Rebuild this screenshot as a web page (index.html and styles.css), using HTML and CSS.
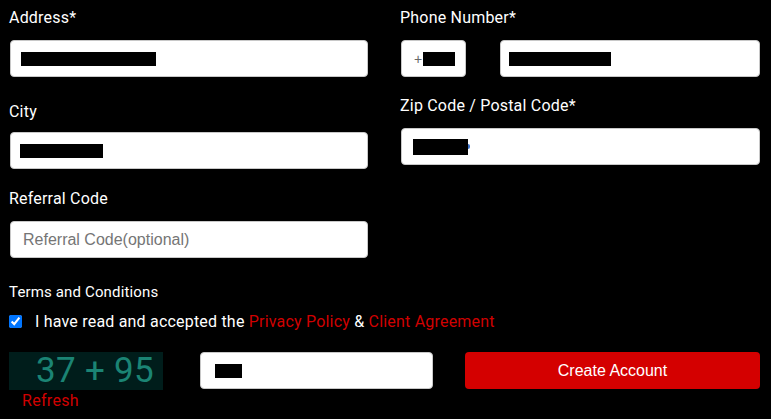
FILE: index.html
```html
<!DOCTYPE html>
<html lang="en">

<head>
    <meta charset="UTF-8">
    <meta name="viewport" content="width=device-width, initial-scale=1.0">
    <title>Create Account</title>
    <link rel="stylesheet" href="styles.css">
</head>

<body>
    <div class="form">
        <div class="fields">
            <div class="column">
                <div class="field">
                    <label>Address*</label>
                    <div class="input"><span class="redact redact-address"></span></div>
                </div>
                <div class="field field-city">
                    <label>City</label>
                    <div class="input"><span class="redact redact-city"></span></div>
                </div>
                <div class="field field-referral">
                    <label>Referral Code</label>
                    <div class="input placeholder">Referral Code(optional)</div>
                </div>
            </div>
            <div class="column">
                <div class="field">
                    <label>Phone Number*</label>
                    <div class="phone-row">
                        <div class="input code"><span class="plus">+</span><span class="redact redact-code"></span></div>
                        <div class="input phone"><span class="redact redact-phone"></span></div>
                    </div>
                </div>
                <div class="field field-zip">
                    <label>Zip Code / Postal Code*</label>
                    <div class="input"><span class="redact redact-zip"></span><span class="zip-tail"></span></div>
                </div>
            </div>
        </div>

        <div class="terms">
            <h4>Terms and Conditions</h4>
            <div class="agree">
                <input type="checkbox" checked>
                <span>I have read and accepted the <a href="#">Privacy Policy</a> &amp; <a href="#">Client Agreement</a></span>
            </div>
        </div>

        <div class="submit-row">
            <div class="captcha">
                <div class="captcha-box">37 + 95</div>
                <a href="#" class="refresh">Refresh</a>
            </div>
            <div class="input captcha-input"><span class="redact redact-captcha"></span></div>
            <button class="create-btn">Create Account</button>
        </div>
    </div>
</body>

</html>
```

FILE: styles.css
```css
body {
    font-family: Roboto, "Liberation Sans", sans-serif;
    background-color: #000;
    color: #fff;
    margin: 0;
    padding: 0;
}

.form {
    padding: 8px 11px 0 10px;
}

.fields {
    display: grid;
    grid-template-columns: 358px 359px;
    column-gap: 33px;
}

.column {
    display: flex;
    flex-direction: column;
}

label {
    display: block;
    font-size: 16px;
    line-height: 19px;
    letter-spacing: 0.2px;
    margin: 0 0 13px -1px;
}

.field-city {
    margin-top: 25px;
}

.field-city label {
    margin-bottom: 11px;
}

.field-referral {
    margin-top: 20px;
}

.field-zip {
    margin-top: 19px;
}

.input {
    box-sizing: border-box;
    height: 37px;
    background-color: #fff;
    border: 1px solid #c8c8c8;
    border-radius: 4px;
    display: flex;
    align-items: center;
    padding-left: 10px;
    font-family: "Liberation Sans", Arial, sans-serif;
    font-size: 16px;
    color: #222;
}

.placeholder {
    color: #757575;
    padding-left: 12px;
}

.redact {
    display: inline-block;
    height: 14px;
    background-color: #000;
}

.redact-address { width: 135px; }
.redact-city { width: 83px; margin-left: -1px; }
.redact-phone { width: 102px; }
.redact-zip { width: 55px; margin-left: 1px; height: 16px; }
.redact-code { width: 32px; }
.redact-captcha { width: 27px; margin-left: 1px; }

.zip-tail {
    display: inline-block;
    width: 2px;
    height: 5px;
    background-color: #3a6fc4;
    border-radius: 0 3px 3px 0;
}

.phone-row {
    display: flex;
    gap: 34px;
}

.code {
    width: 65px;
    padding-left: 12px;
}

.plus {
    color: #666;
    font-size: 14px;
    margin-right: 1px;
}

.phone {
    flex: 1;
    padding-left: 8px;
}

.terms {
    margin-top: 26px;
}

h4 {
    font-size: 15px;
    font-weight: normal;
    line-height: 17px;
    letter-spacing: 0.15px;
    margin: 0 0 11px -1px;
}

.agree {
    display: flex;
    align-items: center;
    height: 19px;
    font-size: 16px;
    letter-spacing: 0.2px;
    margin-left: -1px;
}

.agree input {
    width: 13px;
    height: 13px;
    margin: 0 13px 0 0;
    accent-color: #0075ff;
}

a {
    color: #d00000;
    text-decoration: none;
}

.submit-row {
    display: flex;
    align-items: flex-start;
    margin-top: 21px;
}

.captcha {
    width: 154px;
    margin-left: -1px;
}

.captcha-box {
    height: 38px;
    line-height: 38px;
    background-color: #001d1b;
    color: #1b8474;
    font-size: 35px;
    letter-spacing: 0.3px;
    padding-left: 27px;
}

.refresh {
    display: block;
    font-size: 16px;
    line-height: 19px;
    letter-spacing: 0.3px;
    margin: 1px 0 0 13px;
}

.captcha-input {
    width: 233px;
    margin-left: 37px;
    padding-left: 13px;
}

.create-btn {
    width: 295px;
    height: 37px;
    margin-left: 32px;
    background-color: #d40000;
    border: none;
    border-radius: 4px;
    color: #fff;
    font-family: "Liberation Sans", Arial, sans-serif;
    font-size: 16px;
    cursor: pointer;
}
```
